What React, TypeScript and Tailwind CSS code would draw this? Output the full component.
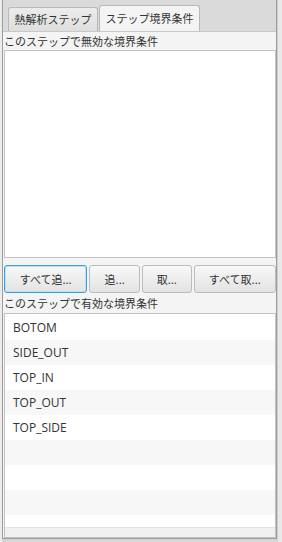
import React from "react";

const jp = "font-['Noto_Sans_CJK_JP','Noto_Sans',sans-serif]";

const enabled = ["BOTOM", "SIDE_OUT", "TOP_IN", "TOP_OUT", "TOP_SIDE", "", "", "", ""];

function Tab({ label, selected }: { label: string; selected?: boolean }) {
  return (
    <div
      className={
        selected
          ? "h-[26px] w-[101px] flex items-center justify-center rounded-t-[3px] border border-b-0 border-[#b9b9b9] bg-[#f4f4f4] text-[11px] text-[#333]"
          : "h-[24px] w-[90px] flex items-center justify-center rounded-t-[3px] border border-b-0 border-[#b9b9b9] bg-gradient-to-b from-[#ececec] to-[#dedede] text-[11px] text-[#333]"
      }
    >
      {label}
    </div>
  );
}

function Btn({ label, w, focused }: { label: string; w: string; focused?: boolean }) {
  return (
    <button
      className={`${w} h-[28px] flex items-center justify-center rounded-[3px] border bg-gradient-to-b from-[#f8f8f8] to-[#e3e3e3] text-[11px] text-[#333] ${
        focused ? "border-[#3aa0d8] shadow-[inset_0_0_0_1px_#bfe1f3]" : "border-[#bcbcbc]"
      }`}
    >
      {label}
    </button>
  );
}

export default function App() {
  return (
    <div className={`w-[282px] h-[542px] flex bg-[#d6d6d6] ${jp}`}>
      <div className="w-[2px] h-full bg-[#ececec]" />
      <div className="w-[275px] h-[539px] flex flex-col border border-t-0 border-[#9c9c9c] bg-[#f4f4f4]">
        <div className="h-[32px] flex items-end gap-[1px] pl-[5px] bg-[#dadada] border-b border-[#c8c8c8]">
          <Tab label="熱解析ステップ" />
          <Tab label="ステップ境界条件" selected />
        </div>
        <div className="h-[18px] leading-[18px] text-[11px] text-[#333] pl-[1px]">
          このステップで無効な境界条件
        </div>
        <div className="ml-[1px] w-[272px] h-[208px] bg-white border border-[#c3c3c3]" />
        <div className="mt-[7px] ml-[1px] flex gap-[2px]">
          <Btn label="すべて追..." w="w-[84px]" focused />
          <Btn label="追..." w="w-[51px]" />
          <Btn label="取..." w="w-[50px]" />
          <Btn label="すべて取..." w="w-[83px]" />
        </div>
        <div className="h-[20px] leading-[20px] text-[11px] text-[#333] pl-[1px]">
          このステップで有効な境界条件
        </div>
        <div className="ml-[1px] w-[272px] flex-1 flex flex-col bg-white border border-[#c3c3c3] overflow-hidden">
          <div className="flex-1 overflow-hidden pt-[1px]">
            {enabled.map((name, i) => (
              <div
                key={i}
                className={`h-[25px] flex items-center pl-[8px] text-[12px] text-[#333] font-['Open_Sans',sans-serif] ${
                  i % 2 === 1 ? "bg-[#f7f7f7]" : "bg-white"
                }`}
              >
                {name}
              </div>
            ))}
          </div>
          <div className="h-[10px] bg-[#f0f0f0] border-t border-[#e2e2e2]" />
        </div>
      </div>
      <div className="flex-1 h-full bg-[#e9e9e9] border-l border-[#cfcfcf]" />
    </div>
  );
}
